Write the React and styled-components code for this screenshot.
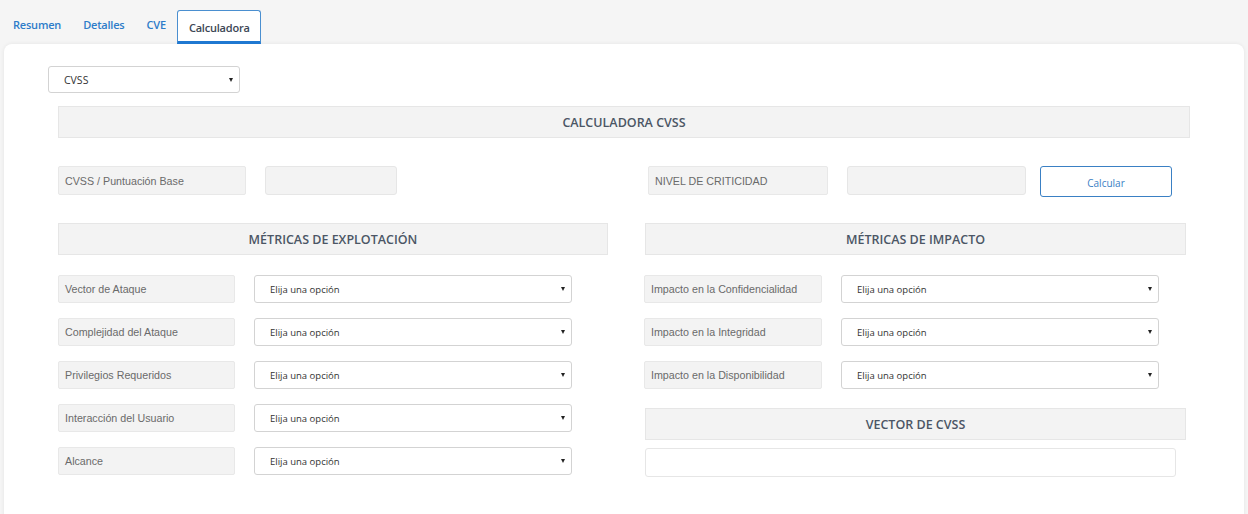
import React from "react";
import styled, { createGlobalStyle } from "styled-components";

const Global = createGlobalStyle`
  html, body { margin: 0; padding: 0; background: #f5f5f5; }
  body { font-family: "Open Sans", "Liberation Sans", sans-serif; color: #333; }
  * { box-sizing: border-box; }
`;

const Page = styled.div`
  width: 1248px;
  height: 514px;
  overflow: hidden;
  background: #f5f5f5;
`;

const TabBar = styled.nav`
  display: flex;
  align-items: stretch;
  height: 44px;
  padding: 10px 0 0 2px;
`;

const Tab = styled.div`
  display: flex;
  align-items: center;
  padding: ${(p) => (p.$active ? "6px 10px 4px 11px" : "0 10px 4px")};
  font-size: 11px;
  letter-spacing: -0.2px;
  font-weight: 600;
  color: ${(p) => (p.$active ? "#3b4654" : "#2d7cc9")};
  background: ${(p) => (p.$active ? "#fff" : "transparent")};
  border: ${(p) => (p.$active ? "1px solid #4a8fd0" : "1px solid transparent")};
  border-bottom: ${(p) => (p.$active ? "3px solid #1f78d1" : "3px solid transparent")};
  border-radius: 3px 3px 0 0;
`;

const Card = styled.main`
  margin: 0 4px;
  height: 480px;
  background: #fff;
  border-radius: 8px;
  box-shadow: 0 0 4px rgba(0, 0, 0, 0.07);
  padding: 22px 0 0 44px;
`;

const SelectBox = styled.div`
  display: flex;
  align-items: center;
  justify-content: space-between;
  width: ${(p) => p.$w}px;
  height: ${(p) => p.$h || 28}px;
  padding: 0 6px 0 ${(p) => p.$pl || 15}px;
  border: 1px solid #d3d3d3;
  border-radius: 3px;
  background: #fff;
  font-size: ${(p) => p.$fs || 9.5}px;
  color: #333;
  flex: none;
`;

const Caret = styled.span`
  width: 0;
  height: 0;
  border-left: 2.5px solid transparent;
  border-right: 2.5px solid transparent;
  border-top: 4px solid #222;
`;

const Content = styled.div`
  padding-left: 10px;
  width: 1142px;
`;

const HeaderBar = styled.div`
  display: flex;
  align-items: center;
  justify-content: center;
  width: ${(p) => (p.$w ? `${p.$w}px` : "100%")};
  height: 32px;
  margin-top: ${(p) => p.$mt || 0}px;
  background: #f3f3f3;
  border: 1px solid #e6e6e6;
  font-size: 12.5px;
  font-weight: 600;
  color: #4b5665;
`;

const Columns = styled.div`
  display: grid;
  grid-template-columns: 550px 541px;
  column-gap: 37px;
  margin-top: 28px;
`;

const Column = styled.div`
  display: flex;
  flex-direction: column;
`;

const TopRow = styled.div`
  display: flex;
  align-items: flex-start;
  gap: 19px;
  margin-left: ${(p) => p.$ml || 0}px;
  height: 29px;
`;

const Label = styled.div`
  display: flex;
  align-items: center;
  width: ${(p) => p.$w}px;
  height: ${(p) => p.$h || 28}px;
  padding-left: 6px;
  background: #f3f3f3;
  border: 1px solid #e8e8e8;
  border-radius: 2px;
  font-family: "Liberation Sans", Arial, sans-serif;
  font-size: 10.7px;
  color: #6a6a6a;
  flex: none;
  margin-left: ${(p) => p.$ml || 0}px;
`;

const Field = styled.div`
  width: ${(p) => p.$w}px;
  height: 29px;
  background: ${(p) => (p.$white ? "#fff" : "#f3f3f3")};
  border: 1px solid #e6e6e6;
  border-radius: 3px;
  flex: none;
  margin-top: ${(p) => p.$mt || 0}px;
`;

const Button = styled.button`
  width: 132px;
  height: 31px;
  margin-left: -5px;
  background: #fff;
  border: 1px solid #3a80c4;
  border-radius: 3px;
  font-family: "Open Sans", sans-serif;
  font-size: 10px;
  color: #3a80c4;
  flex: none;
  padding: 2px 0 0;
`;

const Rows = styled.div`
  display: flex;
  flex-direction: column;
  gap: 15px;
  margin-top: 20px;
`;

const Row = styled.div`
  display: flex;
  align-items: center;
  gap: 19px;
  height: 28px;
`;

const leftMetrics = [
  "Vector de Ataque",
  "Complejidad del Ataque",
  "Privilegios Requeridos",
  "Interacción del Usuario",
  "Alcance",
];

const rightMetrics = [
  "Impacto en la Confidencialidad",
  "Impacto en la Integridad",
  "Impacto en la Disponibilidad",
];

export default function App() {
  return (
    <Page>
      <Global />
      <TabBar>
        <Tab>Resumen</Tab>
        <Tab>Detalles</Tab>
        <Tab>CVE</Tab>
        <Tab $active>Calculadora</Tab>
      </TabBar>
      <Card>
        <SelectBox $w={192} $h={27} $fs={10.5}>
          <span>CVSS</span>
          <Caret />
        </SelectBox>
        <Content>
          <HeaderBar $mt={13} $w={1132}>CALCULADORA CVSS</HeaderBar>
          <Columns>
            <Column>
              <TopRow>
                <Label $w={188} $h={29}>CVSS / Puntuación Base</Label>
                <Field $w={132} />
              </TopRow>
            </Column>
            <Column>
              <TopRow $ml={3}>
                <Label $w={180} $h={29}>NIVEL DE CRITICIDAD</Label>
                <Field $w={179} />
                <Button>Calcular</Button>
              </TopRow>
            </Column>
          </Columns>
          <Columns>
            <Column>
              <HeaderBar>MÉTRICAS DE EXPLOTACIÓN</HeaderBar>
              <Rows>
                {leftMetrics.map((m) => (
                  <Row key={m}>
                    <Label $w={177}>{m}</Label>
                    <SelectBox $w={318}>
                      <span>Elija una opción</span>
                      <Caret />
                    </SelectBox>
                  </Row>
                ))}
              </Rows>
            </Column>
            <Column>
              <HeaderBar>MÉTRICAS DE IMPACTO</HeaderBar>
              <Rows>
                {rightMetrics.map((m) => (
                  <Row key={m}>
                    <Label $w={178} $ml={-1}>{m}</Label>
                    <SelectBox $w={318}>
                      <span>Elija una opción</span>
                      <Caret />
                    </SelectBox>
                  </Row>
                ))}
              </Rows>
              <HeaderBar $mt={19}>VECTOR DE CVSS</HeaderBar>
              <Field $w={531} $white $mt={8} />
            </Column>
          </Columns>
        </Content>
      </Card>
    </Page>
  );
}
